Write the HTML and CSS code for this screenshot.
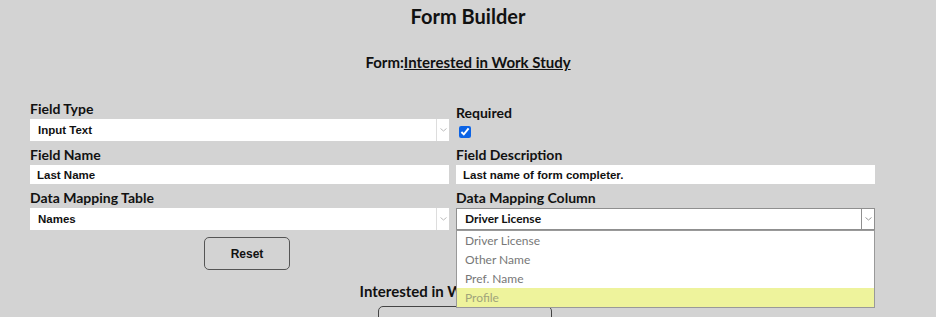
FILE: index.html
```html
<!DOCTYPE html>
<html lang="en">
<head>
    <meta charset="UTF-8">
    <meta name="viewport" content="width=device-width, initial-scale=1.0">
    <title>Form Builder</title>
    <link rel="stylesheet" href="styles.css">
</head>
<body>
    <h1>Form Builder</h1>

    <h3 class="form-title">Form:<a href="#">Interested in Work Study</a></h3>

    <div class="fields">
        <div class="field">
            <label>Field Type</label>
            <div class="select">
                <span class="value">Input Text</span>
                <span class="arrow"><svg width="7" height="4" viewBox="0 0 7 4"><path d="M0.5 0.5 L3.5 3 L6.5 0.5" fill="none" stroke="#bbb" stroke-width="1"/></svg></span>
            </div>
        </div>
        <div class="field field-required">
            <label>Required</label>
            <input type="checkbox" class="check" checked>
        </div>

        <div class="field">
            <label>Field Name</label>
            <input type="text" class="text" value="Last Name">
        </div>
        <div class="field">
            <label>Field Description</label>
            <input type="text" class="text" value="Last name of form completer.">
        </div>

        <div class="field">
            <label>Data Mapping Table</label>
            <div class="select">
                <span class="value">Names</span>
                <span class="arrow"><svg width="7" height="4" viewBox="0 0 7 4"><path d="M0.5 0.5 L3.5 3 L6.5 0.5" fill="none" stroke="#bbb" stroke-width="1"/></svg></span>
            </div>
        </div>
        <div class="field">
            <label>Data Mapping Column</label>
            <div class="select select-open">
                <span class="value">Driver License</span>
                <span class="arrow"><svg width="7" height="4" viewBox="0 0 7 4"><path d="M0.5 0.5 L3.5 3 L6.5 0.5" fill="none" stroke="#999" stroke-width="1"/></svg></span>
                <ul class="options">
                    <li>Driver License</li>
                    <li>Other Name</li>
                    <li>Pref. Name</li>
                    <li class="hover">Profile</li>
                </ul>
            </div>
        </div>

        <div class="field">
            <button class="reset">Reset</button>
        </div>
    </div>

    <!-- preview -->
    <div class="preview">
        <h3>Interested in Work Study</h3>
        <div class="preview-box"></div>
    </div>
</body>
</html>
```

FILE: styles.css
```css
body {
    margin: 0;
    background-color: #d3d3d3;
    font-family: Lato, "Liberation Sans", sans-serif;
    color: #111;
    overflow: hidden;
}
h1 {
    margin: 0;
    padding-top: 4px;
    font-size: 20px;
    line-height: 24px;
    text-align: center;
}
.form-title {
    margin: 24px 0 0;
    font-size: 15px;
    line-height: 20px;
    text-align: center;
}
.form-title a {
    color: #111;
    text-decoration: underline;
}
.fields {
    display: grid;
    grid-template-columns: 419px 419px;
    column-gap: 7px;
    row-gap: 6px;
    padding-left: 30px;
    margin-top: 29px;
}
.field {
    display: flex;
    flex-direction: column;
}
.field label {
    font-size: 14px;
    font-weight: bold;
    line-height: 16px;
    margin-bottom: 2px;
}
.field-required {
    justify-content: flex-end;
}
.check {
    width: 12px;
    height: 12px;
    margin: 3px 0 3px 3px;
    accent-color: #0b63e5;
}
.text {
    height: 19px;
    box-sizing: border-box;
    border: none;
    padding: 0 7px;
    font-family: "Liberation Sans", sans-serif;
    font-size: 11.5px;
    font-weight: bold;
    color: #111;
    background: white;
    outline: none;
}
.select {
    position: relative;
    display: flex;
    height: 22px;
    box-sizing: border-box;
    background: white;
}
.select .value {
    flex: 1;
    padding-left: 8px;
    font-family: "Liberation Sans", sans-serif;
    font-size: 11.5px;
    font-weight: bold;
    line-height: 22px;
}
.select .arrow {
    width: 12px;
    border-left: 1px solid #ddd;
    display: flex;
    align-items: center;
    justify-content: center;
}
.select-open {
    border: 1px solid #8f8f8f;
}
.select-open .value {
    font-family: Lato, sans-serif;
    font-size: 12px;
    line-height: 20px;
}
.select-open .arrow {
    border-left: 1px solid #8f8f8f;
}
.options {
    position: absolute;
    left: -1px;
    right: -1px;
    top: 21px;
    margin: 0;
    padding: 0;
    list-style: none;
    background: white;
    border: 1px solid #999;
    z-index: 2;
}
.options li {
    height: 19px;
    line-height: 19px;
    padding-left: 8px;
    font-size: 12px;
    color: #777;
}
.options li.hover {
    background-color: #eef39c;
    color: #a0a47a;
}
.reset {
    margin: 1px 0 0 174px;
    width: 86px;
    height: 33px;
    background: transparent;
    border: 1px solid #555;
    border-radius: 5px;
    font-family: "Liberation Sans", sans-serif;
    font-size: 12px;
    font-weight: bold;
    color: #111;
}
.preview {
    display: flex;
    flex-direction: column;
    align-items: center;
}
.preview h3 {
    margin: 12px 0 0;
    padding-right: 50px;
    font-size: 15px;
    line-height: 18px;
}
.preview-box {
    margin-top: 6px;
    margin-right: 6px;
    width: 172px;
    height: 34px;
    border: 1px solid #444;
    border-radius: 5px;
}
```
